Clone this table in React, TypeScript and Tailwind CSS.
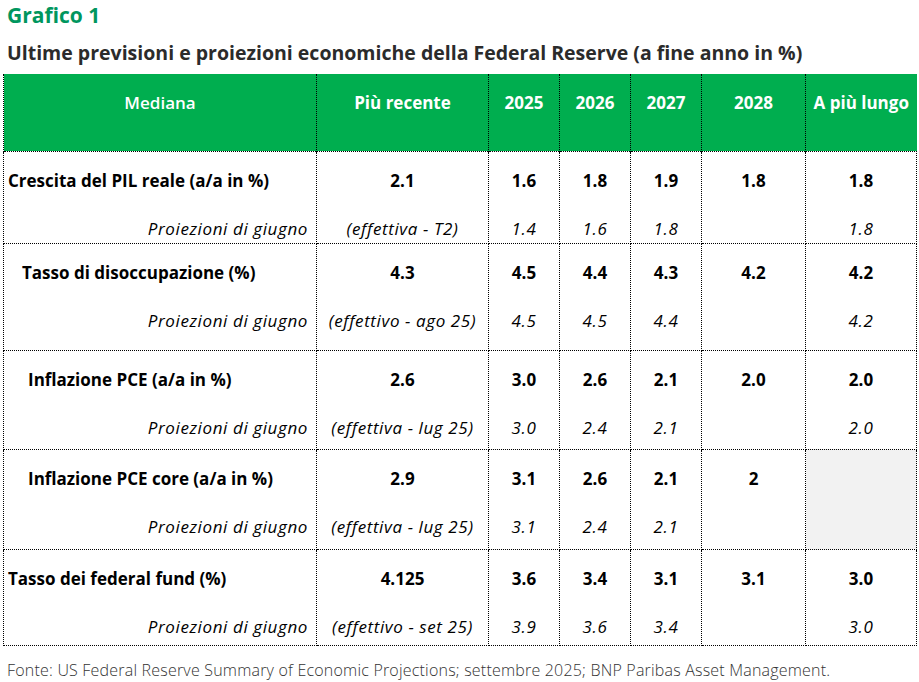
const rows = [
  {
    label: 'Crescita del PIL reale (a/a in %)',
    indent: 'pl-[4px]',
    h: 'h-[92px]',
    recent: '2.1',
    recentSub: '(effettiva - T2)',
    main: ['1.6', '1.8', '1.9', '1.8', '1.8'],
    sub: ['1.4', '1.6', '1.8', '', '1.8'],
  },
  {
    label: 'Tasso di disoccupazione (%)',
    indent: 'pl-[18px]',
    h: 'h-[107px]',
    recent: '4.3',
    recentSub: '(effettivo - ago 25)',
    main: ['4.5', '4.4', '4.3', '4.2', '4.2'],
    sub: ['4.5', '4.5', '4.4', '', '4.2'],
  },
  {
    label: 'Inflazione PCE (a/a in %)',
    indent: 'pl-[24px]',
    h: 'h-[99px]',
    recent: '2.6',
    recentSub: '(effettiva - lug 25)',
    main: ['3.0', '2.6', '2.1', '2.0', '2.0'],
    sub: ['3.0', '2.4', '2.1', '', '2.0'],
  },
  {
    label: 'Inflazione PCE core (a/a in %)',
    indent: 'pl-[24px]',
    h: 'h-[100px]',
    recent: '2.9',
    recentSub: '(effettiva - lug 25)',
    main: ['3.1', '2.6', '2.1', '2', ''],
    sub: ['3.1', '2.4', '2.1', '', ''],
    grey: true,
  },
  {
    label: 'Tasso dei federal fund (%)',
    indent: 'pl-[4px]',
    h: 'h-[96px]',
    recent: '4.125',
    recentSub: '(effettivo - set 25)',
    main: ['3.6', '3.4', '3.1', '3.1', '3.0'],
    sub: ['3.9', '3.6', '3.4', '', '3.0'],
  },
];

const headers = ['Più recente', '2025', '2026', '2027', '2028', 'A più lungo'];

const Cell = ({ main, sub, bg = '' }: { main: string; sub: string; bg?: string }) => (
  <td className={`border border-dotted border-black align-top text-center pt-[17px] ${bg}`}>
    <div className="font-bold text-[17px] leading-[24px] text-black">{main || '\u00a0'}</div>
    <div className="italic text-[17px] leading-[24px] tracking-[0.6px] text-black mt-[24px] whitespace-nowrap">
      {sub || '\u00a0'}
    </div>
  </td>
);

export default function App() {
  return (
    <div className="w-[919px] h-[682px] bg-white overflow-hidden font-['Open_Sans',sans-serif] text-black">
      <div className="pl-[7px] pt-[2px] text-[21px] leading-[26px] font-bold text-[#00965e]">Grafico 1</div>
      <div className="pl-[7px] mt-[12px] text-[19.5px] leading-[26px] font-bold text-[#2b2b2b] whitespace-nowrap">
        Ultime previsioni e proiezioni economiche della Federal Reserve (a fine anno in %)
      </div>
      <table className="ml-[3px] mt-[8px] border-collapse table-fixed w-[913px]">
        <colgroup>
          <col className="w-[313px]" />
          <col className="w-[172px]" />
          <col className="w-[71px]" />
          <col className="w-[71px]" />
          <col className="w-[71px]" />
          <col className="w-[104px]" />
          <col className="w-[111px]" />
        </colgroup>
        <thead>
          <tr className="h-[77px] bg-[#00ae4f] text-white">
            <th className="border-l border-dotted border-black align-top pt-[17px] text-[17px] leading-[24px] font-semibold">
              Mediana
            </th>
            {headers.map((h) => (
              <th
                key={h}
                className="border-l border-dotted border-black align-top pt-[17px] text-[17px] leading-[24px] font-bold whitespace-nowrap"
              >
                {h}
              </th>
            ))}
          </tr>
        </thead>
        <tbody>
          {rows.map((r) => (
            <tr key={r.label} className={r.h}>
              <td className={`border border-dotted border-black align-top pt-[17px] pr-[8px] ${r.indent}`}>
                <div className="font-bold text-[17px] leading-[24px] whitespace-nowrap">{r.label}</div>
                <div className="italic text-[17px] leading-[24px] tracking-[0.6px] mt-[24px] text-right">
                  Proiezioni di giugno
                </div>
              </td>
              <Cell main={r.recent} sub={r.recentSub} />
              {r.main.map((m, i) => (
                <Cell key={i} main={m} sub={r.sub[i]} bg={r.grey && i === 4 ? 'bg-[#f2f2f2]' : ''} />
              ))}
            </tr>
          ))}
        </tbody>
      </table>
      <div className="pl-[7px] mt-[13px] text-[16px] leading-[22px] tracking-[0.2px] font-light text-[#333] whitespace-nowrap">
        Fonte: US Federal Reserve Summary of Economic Projections; settembre 2025; BNP Paribas Asset Management.
      </div>
    </div>
  );
}
